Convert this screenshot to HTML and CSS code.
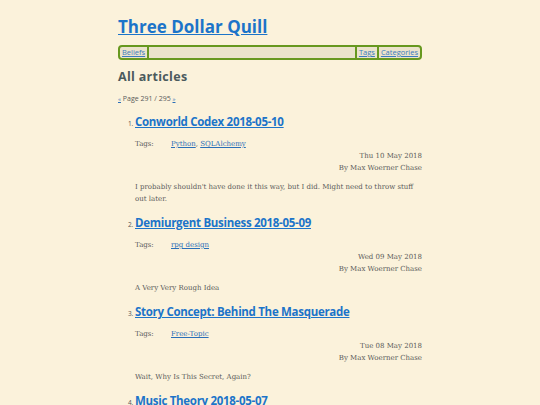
FILE: index.html
```html
<!DOCTYPE html>
<html lang="en">
<head>
    <meta charset="UTF-8">
    <meta name="viewport" content="width=device-width, initial-scale=1.0">
    <title>All articles | Three Dollar Quill</title>
    <link rel="stylesheet" href="styles.css">
</head>
<body>
    <div class="page">
        <header class="site-header">
            <h1 class="site-title"><a href="#">Three Dollar Quill</a></h1>
            <nav class="site-nav">
                <a href="#">Beliefs</a>
                <span class="nav-fill"></span>
                <a href="#">Tags</a>
                <a href="#">Categories</a>
            </nav>
        </header>

        <main>
            <h2 class="section-title">All articles</h2>
            <p class="pager"><a href="#">«</a> Page 291 / 295 <a href="#">»</a></p>

            <ol class="articles">
                <li class="article">
                    <h3 class="article-title"><a href="#">Conworld Codex 2018-05-10</a></h3>
                    <div class="tags"><span class="tags-label">Tags:</span> <span><a href="#">Python</a>, <a href="#">SQLAlchemy</a></span></div>
                    <div class="meta">
                        <div>Thu 10 May 2018</div>
                        <div>By Max Woerner Chase</div>
                    </div>
                    <p class="summary">I probably shouldn't have done it this way, but I did. Might need to throw stuff out later.</p>
                </li>
                <li class="article">
                    <h3 class="article-title"><a href="#">Demiurgent Business 2018-05-09</a></h3>
                    <div class="tags"><span class="tags-label">Tags:</span> <span><a href="#">rpg design</a></span></div>
                    <div class="meta">
                        <div>Wed 09 May 2018</div>
                        <div>By Max Woerner Chase</div>
                    </div>
                    <p class="summary">A Very Very Rough Idea</p>
                </li>
                <li class="article">
                    <h3 class="article-title"><a href="#">Story Concept: Behind The Masquerade</a></h3>
                    <div class="tags"><span class="tags-label">Tags:</span> <span><a href="#">Free-Topic</a></span></div>
                    <div class="meta">
                        <div>Tue 08 May 2018</div>
                        <div>By Max Woerner Chase</div>
                    </div>
                    <p class="summary">Wait, Why Is This Secret, Again?</p>
                </li>
                <li class="article">
                    <h3 class="article-title"><a href="#">Music Theory 2018-05-07</a></h3>
                    <div class="tags"><span class="tags-label">Tags:</span> <span><a href="#">music</a></span></div>
                    <div class="meta">
                        <div>Mon 07 May 2018</div>
                        <div>By Max Woerner Chase</div>
                    </div>
                    <p class="summary">Scales and such.</p>
                </li>
            </ol>
        </main>
    </div>
</body>
</html>
```

FILE: styles.css
```css
* {
    box-sizing: border-box;
}

body {
    margin: 0;
    background-color: #fbf2db;
    color: #5a5a5a;
    font-family: "DejaVu Serif", "Liberation Serif", serif;
    font-size: 7px;
    line-height: 12px;
}

a {
    color: #2a6fb8;
}

.page {
    width: 304px;
    margin: 0 auto;
    padding-top: 16px;
}

/* header */
.site-title {
    margin: 0 0 7px;
    font-family: "Open Sans", sans-serif;
    font-size: 17px;
    line-height: 22px;
    font-weight: 700;
}

.site-title a {
    color: #1c74c9;
}

.site-nav {
    display: flex;
    align-items: stretch;
    height: 15px;
    border: 2px solid #67981f;
    border-radius: 4px;
    background-color: #ebe3cb;
    font-family: "Open Sans", sans-serif;
    font-size: 7.5px;
    line-height: 11px;
}

.site-nav a {
    padding: 0 2px;
    color: #3b7bbd;
}

.site-nav a + .nav-fill,
.nav-fill + a,
.site-nav a + a {
    border-left: 2px solid #67981f;
}

.nav-fill {
    flex: 1;
}

/* listing */
.section-title {
    margin: 8px 0 0;
    font-family: "Open Sans", sans-serif;
    font-size: 12.5px;
    line-height: 18px;
    font-weight: 700;
    letter-spacing: 0.3px;
    color: #4b5a5d;
}

.pager {
    margin: 7px 0 0;
    font-family: "Open Sans", sans-serif;
    font-size: 7px;
}

.pager a {
    font-size: 6px;
}

.articles {
    margin: 8px 0 0;
    padding-left: 17px;
}

.article::marker {
    font-family: "Open Sans", sans-serif;
    font-size: 6.5px;
    color: #555;
}

.article-title {
    margin: 1px 0 0;
    font-family: "Open Sans", sans-serif;
    font-size: 11.5px;
    line-height: 18px;
    font-weight: 700;
    letter-spacing: -0.3px;
}

.article-title a {
    color: #1c74c9;
}

.tags {
    display: flex;
    margin-top: 7px;
}

.tags-label {
    width: 36px;
}

.meta {
    text-align: right;
}

.summary {
    margin: 7px 0 0;
    padding-bottom: 8px;
}
```
